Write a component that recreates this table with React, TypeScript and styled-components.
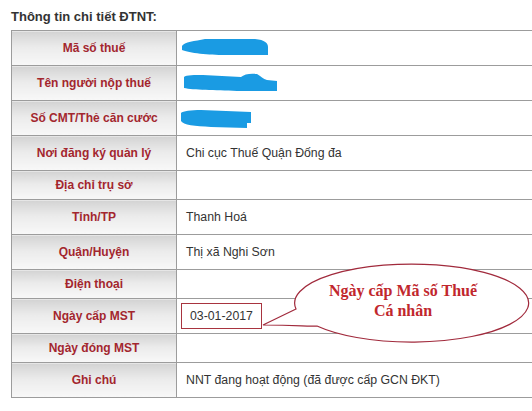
import React from 'react';
import styled, { createGlobalStyle } from 'styled-components';

const GlobalStyle = createGlobalStyle`
  html, body { margin: 0; padding: 0; background: #fff; overflow: hidden; }
  body { font-family: "Liberation Sans", Arial, sans-serif; }
`;

const Page = styled.div`
  position: relative;
  width: 532px;
  height: 411px;
  padding: 9px 0 0 11px;
  box-sizing: border-box;
  overflow: hidden;
  background: #fff;
`;

const Title = styled.h3`
  margin: 0 0 5px;
  font: bold 13px/16px "Liberation Sans", Arial, sans-serif;
  color: #333;
`;

const Table = styled.table`
  border-collapse: collapse;
  width: 540px;
  table-layout: fixed;
`;

const LabelCell = styled.th`
  width: 148px;
  padding: 6px 8px;
  border: 1px solid #9c9c9c;
  background: linear-gradient(to bottom, #d3d3d3 0%, #ebebeb 45%, #f8f8f8 100%);
  color: #a3262e;
  font: bold 12px/16px "Liberation Sans", Arial, sans-serif;
  text-align: center;
`;

const ValueCell = styled.td<{ $pad?: string }>`
  padding: ${(p) => p.$pad ?? '9px 9px'};
  border: 1px solid #9c9c9c;
  color: #333;
  font: 12.3px/16px "Liberation Sans", Arial, sans-serif;
  text-align: left;
  background: #fff;
`;

const DateBox = styled.span`
  display: inline-block;
  padding: 4px 8px;
  border: 1px solid #a8343f;
  line-height: 16px;
`;

const RedactSvg = styled.svg`
  display: block;
  width: 100px;
  height: 20px;
  margin: -2px 0 -2px -5px;
  overflow: visible;
`;

const Bubble = styled.div`
  position: absolute;
  left: 260px;
  top: 262px;
  width: 272px;
  height: 82px;
`;

const BubbleShape = styled.svg`
  position: absolute;
  left: 0;
  top: 0;
  width: 272px;
  height: 82px;
  overflow: visible;
`;

const BubbleText = styled.div`
  position: absolute;
  left: 0;
  top: 19px;
  width: 286px;
  text-align: center;
  font: bold 16px/20px "Liberation Serif", "Times New Roman", serif;
  color: #c1272d;
`;

const Redact = ({ d }: { d: string }) => (
  <RedactSvg viewBox="0 0 100 20">
    <path d={d} fill="#1a9be3" />
  </RedactSvg>
);

type Row = { label: string; value?: React.ReactNode; pad?: string };

const rows: Row[] = [
  {
    label: 'Mã số thuế',
    value: <Redact d="M1 8 C3 4 14 3 24 1 L74 1 C84 2 87 5 87 9 L87 17 L44 17 C28 17 8 15 1 12 Z" />,
  },
  {
    label: 'Tên người nộp thuế',
    value: (
      <Redact d="M3 4 C5 2 14 2 22 2 L60 4 C63 1 70 0 76 1 C80 3 82 6 86 7 L96 8 L96 18 L56 18 C34 17 12 17 3 15 Z" />
    ),
  },
  {
    label: 'Số CMT/Thẻ căn cước',
    value: <Redact d="M0 5 C2 3 10 2 20 2 L70 4 L70 15 L66 15 L66 20 L30 19 C14 18 2 17 0 13 Z" />,
  },
  { label: 'Nơi đăng ký quản lý', value: 'Chi cục Thuế Quận Đống đa' },
  { label: 'Địa chỉ trụ sở' },
  { label: 'Tỉnh/TP', value: 'Thanh Hoá' },
  { label: 'Quận/Huyện', value: 'Thị xã Nghi Sơn' },
  { label: 'Điện thoại' },
  { label: 'Ngày cấp MST', value: <DateBox>03-01-2017</DateBox>, pad: '4px 4px' },
  { label: 'Ngày đóng MST' },
  { label: 'Ghi chú', value: 'NNT đang hoạt động (đã được cấp GCN ĐKT)' },
];

export default function App() {
  return (
    <>
      <GlobalStyle />
      <Page>
        <Title>Thông tin chi tiết ĐTNT:</Title>
        <Table>
          <tbody>
            {rows.map((r) => (
              <tr key={r.label}>
                <LabelCell>{r.label}</LabelCell>
                <ValueCell $pad={r.pad}>{r.value}</ValueCell>
              </tr>
            ))}
          </tbody>
        </Table>
        <Bubble>
          <BubbleShape viewBox="0 0 272 82">
            <path
              d="M36 47 A117 39 0 1 1 57 64 C48 65 40 63 3 63 L36 47 Z"
              fill="#fff"
              stroke="#a12a3c"
              strokeWidth="1.2"
            />
          </BubbleShape>
          <BubbleText>
            Ngày cấp Mã số Thuế
            <br />
            Cá nhân
          </BubbleText>
        </Bubble>
      </Page>
    </>
  );
}
